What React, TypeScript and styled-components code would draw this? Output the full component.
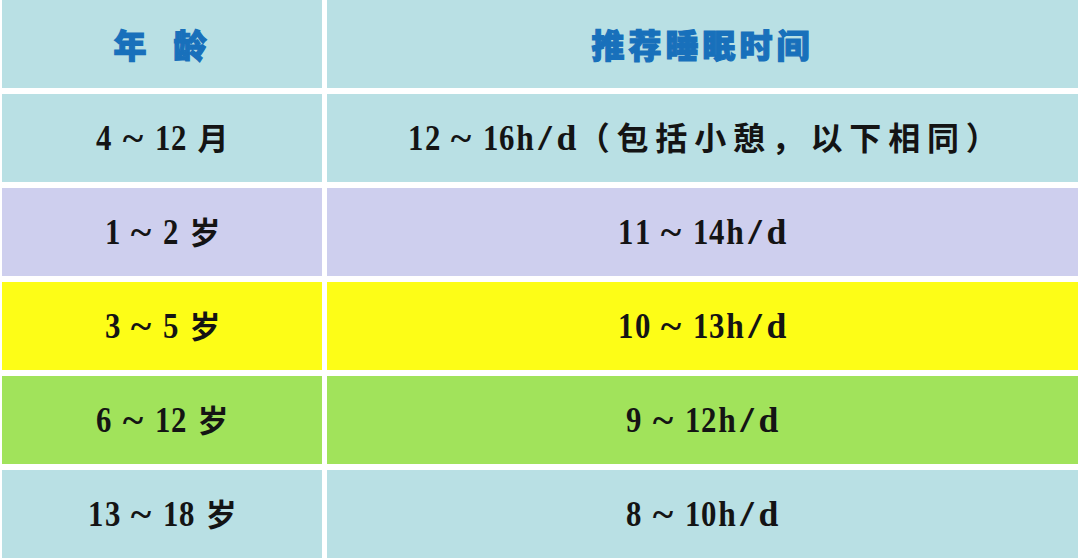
import React from "react";
import styled, { createGlobalStyle } from "styled-components";

const GlobalStyle = createGlobalStyle`
  html, body {
    margin: 0;
    padding: 0;
    background: #ffffff;
  }
`;

const Table = styled.div`
  width: 1080px;
  height: 558px;
  box-sizing: border-box;
  padding: 0 2px;
  display: grid;
  grid-template-columns: 320px 1fr;
  grid-auto-rows: 88px;
  column-gap: 5px;
  row-gap: 6px;
  background: #ffffff;
`;

const Cell = styled.div<{ $bg: string }>`
  background: ${(p) => p.$bg};
  display: flex;
  align-items: center;
  justify-content: center;
  color: #141414;
  white-space: pre;
`;

const HeadCell = styled(Cell)`
  font-family: "Noto Sans CJK SC", sans-serif;
  font-weight: 900;
  font-size: 33px;
  letter-spacing: 4px;
  color: #1870bb;
  -webkit-text-stroke: 1.2px #1870bb;
`;

const Line = styled.div`
  display: flex;
  align-items: baseline;
  line-height: 1;
`;

// latin glyphs sit in fixed slots, like the half-width latin of a chinese face
const Latin = styled.span<{ $w: number; $sx: number }>`
  display: inline-block;
  width: ${(p) => p.$w}px;
  text-align: center;
  font-family: "Liberation Serif", serif;
  font-weight: 700;
  font-size: 35px;
  transform: scaleX(${(p) => p.$sx});
`;

const Han = styled.span<{ $size: number; $spacing: number }>`
  font-family: "Noto Sans CJK SC", sans-serif;
  font-weight: 700;
  font-size: ${(p) => p.$size}px;
  letter-spacing: ${(p) => p.$spacing}px;
  margin-right: ${(p) => -p.$spacing}px;
`;

const slots: Record<string, [number, number]> = {
  " ": [11, 1],
  "~": [20, 1.12],
  h: [20, 0.9],
  "/": [20, 1.4],
  d: [23, 1.02],
};

type Row = {
  age: string;
  time: string;
  bg: string;
};

const rows: Row[] = [
  { age: "4 ~ 12 月", time: "12 ~ 16h/d（包括小憩，以下相同）", bg: "#b9e0e4" },
  { age: "1 ~ 2 岁", time: "11 ~ 14h/d", bg: "#cecfee" },
  { age: "3 ~ 5 岁", time: "10 ~ 13h/d", bg: "#fdfd17" },
  { age: "6 ~ 12 岁", time: "9 ~ 12h/d", bg: "#a1e35b" },
  { age: "13 ~ 18 岁", time: "8 ~ 10h/d", bg: "#b9e0e4" },
];

const Mixed = ({ text, han, spacing }: { text: string; han: number; spacing: number }) => {
  const parts = text.match(/[\x00-\x7f]+|[^\x00-\x7f]+/g) || [];
  return (
    <Line>
      {parts.map((p, i) =>
        /^[\x00-\x7f]+$/.test(p) ? (
          p.split("").map((c, j) => {
            const [w, sx] = slots[c] ?? [16.4, 0.88];
            return (
              <Latin key={i + "-" + j} $w={w} $sx={sx}>
                {c}
              </Latin>
            );
          })
        ) : (
          <Han key={i} $size={han} $spacing={spacing}>
            {p}
          </Han>
        )
      )}
    </Line>
  );
};

const App = () => {
  return (
    <>
      <GlobalStyle />
      <Table>
        <HeadCell $bg="#b9e0e4">年  龄</HeadCell>
        <HeadCell $bg="#b9e0e4">推荐睡眠时间</HeadCell>
        {rows.map((row) => (
          <React.Fragment key={row.age}>
            <Cell $bg={row.bg}>
              <Mixed text={row.age} han={31} spacing={0} />
            </Cell>
            <Cell $bg={row.bg}>
              <Mixed text={row.time} han={32} spacing={6.8} />
            </Cell>
          </React.Fragment>
        ))}
      </Table>
    </>
  );
};

export default App;
